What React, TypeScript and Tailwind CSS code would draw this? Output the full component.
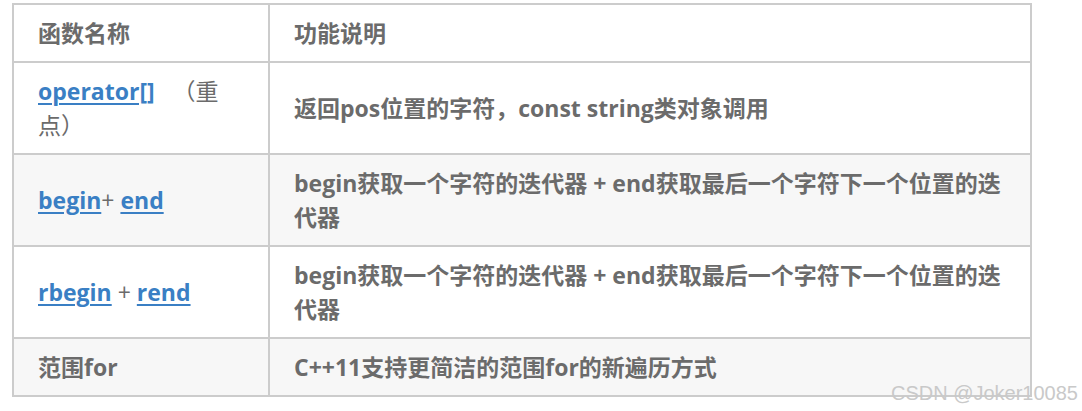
const font = '"Open Sans", "Noto Sans CJK SC", sans-serif';

function A({ children }: { children: React.ReactNode }) {
  return (
    <a href="#" className="text-[#3a7fc4] underline underline-offset-[3px] decoration-2">
      {children}
    </a>
  );
}

const rows: { name: React.ReactNode; desc: string; shade: boolean }[] = [
  {
    name: (
      <>
        <A>operator[]</A>
        <span className="font-normal">{"\u00a0\u00a0 "}（重点）</span>
      </>
    ),
    desc: "返回pos位置的字符，const string类对象调用",
    shade: false,
  },
  {
    name: (
      <>
        <A>begin</A>
        <span className="font-normal">+ </span>
        <A>end</A>
      </>
    ),
    desc: "begin获取一个字符的迭代器 + end获取最后一个字符下一个位置的迭代器",
    shade: true,
  },
  {
    name: (
      <>
        <A>rbegin</A>
        <span className="font-normal"> + </span>
        <A>rend</A>
      </>
    ),
    desc: "begin获取一个字符的迭代器 + end获取最后一个字符下一个位置的迭代器",
    shade: false,
  },
  { name: "范围for", desc: "C++11支持更简洁的范围for的新遍历方式", shade: true },
];

export default function App() {
  return (
    <div className="relative w-[1082px] h-[411px] bg-white overflow-hidden" style={{ fontFamily: font }}>
      <div className="pl-[12px] pt-[3px]">
        <table className="w-[1020px] border-collapse border-2 border-[#cccccc] text-[23px] leading-[34px] font-bold text-[#6b6b6b]">
          <colgroup>
            <col className="w-[256px]" />
            <col />
          </colgroup>
          <thead>
            <tr>
              <th className="text-left font-bold border-2 border-[#cccccc] px-[24px] py-[11px]">函数名称</th>
              <th className="text-left font-bold border-2 border-[#cccccc] px-[24px] py-[11px]">功能说明</th>
            </tr>
          </thead>
          <tbody>
            {rows.map((r, i) => (
              <tr key={i} className={r.shade ? "bg-[#f7f7f7]" : "bg-white"}>
                <td className="border-2 border-[#cccccc] px-[24px] py-[11px] align-middle">{r.name}</td>
                <td className="border-2 border-[#cccccc] px-[24px] py-[11px] align-middle">{r.desc}</td>
              </tr>
            ))}
          </tbody>
        </table>
      </div>
      <div
        className="absolute right-[4px] top-[382px] text-[20px] leading-[22px] text-[#c9c9c9]"
        style={{ fontFamily: '"Liberation Sans", Arial, sans-serif' }}
      >
        CSDN @Joker10085
      </div>
    </div>
  );
}
